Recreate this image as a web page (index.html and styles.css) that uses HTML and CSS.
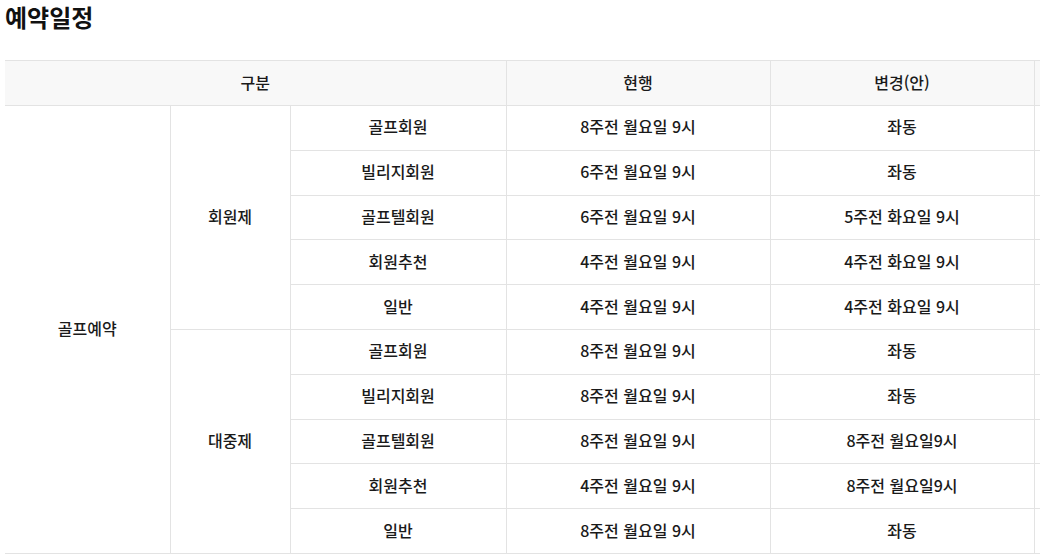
FILE: index.html
```html
<!DOCTYPE html>
<html lang="ko">
<head>
<meta charset="utf-8">
<link rel="stylesheet" href="styles.css">
</head>
<body>
<h2 class="title">예약일정</h2>
<div class="wrap">
<table class="sched">
  <colgroup>
    <col class="c1"><col class="c2"><col class="c3"><col class="c4"><col class="c5"><col class="c6">
  </colgroup>
  <thead>
    <tr><th colspan="3">구분</th><th>현행</th><th>변경(안)</th><th></th></tr>
  </thead>
  <tbody>
    <tr><td rowspan="10">골프예약</td><td rowspan="5">회원제</td><td>골프회원</td><td>8주전 월요일 9시</td><td>좌동</td><td></td></tr>
    <tr><td>빌리지회원</td><td>6주전 월요일 9시</td><td>좌동</td><td></td></tr>
    <tr><td>골프텔회원</td><td>6주전 월요일 9시</td><td>5주전 화요일 9시</td><td></td></tr>
    <tr><td>회원추천</td><td>4주전 월요일 9시</td><td>4주전 화요일 9시</td><td></td></tr>
    <tr><td>일반</td><td>4주전 월요일 9시</td><td>4주전 화요일 9시</td><td></td></tr>
    <tr><td rowspan="5">대중제</td><td>골프회원</td><td>8주전 월요일 9시</td><td>좌동</td><td></td></tr>
    <tr><td>빌리지회원</td><td>8주전 월요일 9시</td><td>좌동</td><td></td></tr>
    <tr><td>골프텔회원</td><td>8주전 월요일 9시</td><td>8주전 월요일9시</td><td></td></tr>
    <tr><td>회원추천</td><td>4주전 월요일 9시</td><td>8주전 월요일9시</td><td></td></tr>
    <tr><td>일반</td><td>8주전 월요일 9시</td><td>좌동</td><td></td></tr>
  </tbody>
</table>
</div>
</body>
</html>
```

FILE: styles.css
```css
html, body {
  margin: 0;
  padding: 0;
  background: #fff;
  overflow: hidden;
}
body {
  padding: 0 0 0 5px;
  font-family: "Noto Sans CJK KR", "Noto Sans", sans-serif;
  color: #222;
}
.title {
  margin: 0;
  padding-top: 0;
  font-size: 24px;
  line-height: 34px;
  font-weight: 700;
  color: #111;
}
.wrap {
  margin-top: 26px;
  width: 1200px;
}
.sched {
  border-collapse: collapse;
  table-layout: fixed;
  width: 1200px;
  font-size: 16px;
  font-weight: 500;
  color: #1a1a1a;
}
.c1 { width: 165px; }
.c2 { width: 120px; }
.c3 { width: 216px; }
.c4 { width: 264px; }
.c5 { width: 264px; }
.c6 { width: 171px; }
.sched th, .sched td {
  border: 1px solid #e3e3e3;
  text-align: center;
  vertical-align: middle;
  padding: 0 0 3px;
  height: 40.8px;
  line-height: 20px;
}
.sched th {
  background: #f8f8f8;
  font-weight: 500;
  height: 42px;
  padding-bottom: 2px;
}
.sched tr > :first-child { border-left: none; }
```
